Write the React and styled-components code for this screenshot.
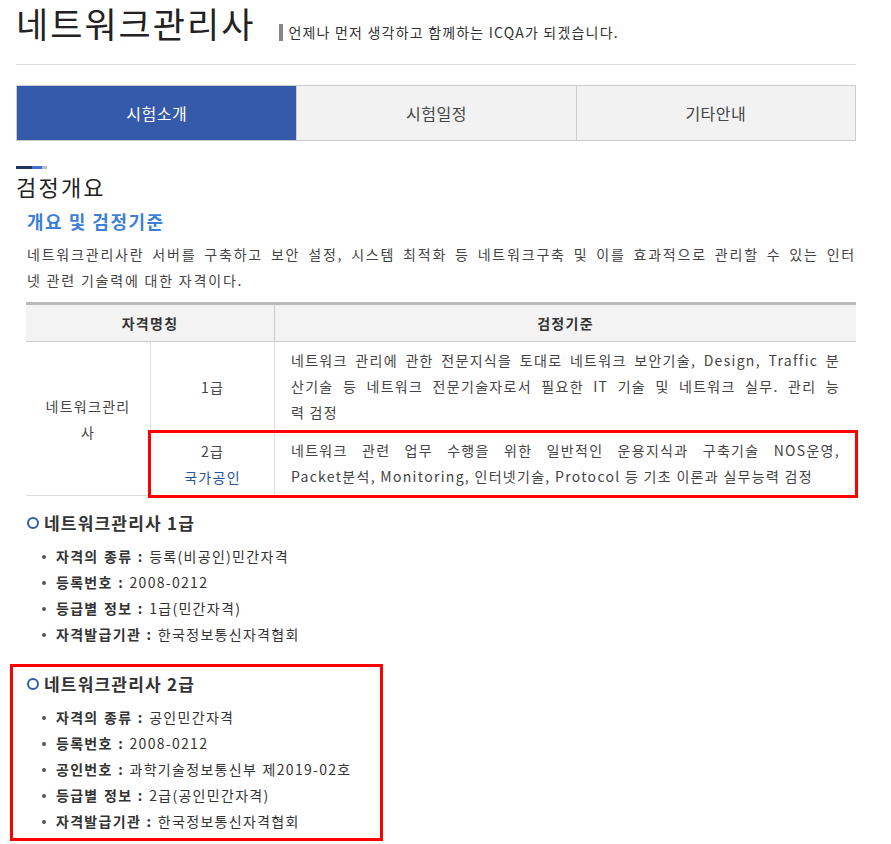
import React from 'react';
import styled, { createGlobalStyle } from 'styled-components';

const GlobalStyle = createGlobalStyle`
  html, body {
    margin: 0;
    padding: 0;
    background: #fff;
  }
  body {
    font-family: "Noto Sans CJK KR", "Noto Sans", sans-serif;
    color: #333;
  }
`;

const tabs = ['시험소개', '시험일정', '기타안내'];

const grade1 = [
  ['자격의 종류', '등록(비공인)민간자격'],
  ['등록번호', '2008-0212'],
  ['등급별 정보', '1급(민간자격)'],
  ['자격발급기관', '한국정보통신자격협회'],
];

const grade2 = [
  ['자격의 종류', '공인민간자격'],
  ['등록번호', '2008-0212'],
  ['공인번호', '과학기술정보통신부 제2019-02호'],
  ['등급별 정보', '2급(공인민간자격)'],
  ['자격발급기관', '한국정보통신자격협회'],
];

const App = () => (
  <>
    <GlobalStyle />
    <Page>
      <Header>
        <Title>네트워크관리사</Title>
        <Slogan>언제나 먼저 생각하고 함께하는 ICQA가 되겠습니다.</Slogan>
      </Header>

      <Tabs>
        {tabs.map((t, i) => (
          <Tab key={t} active={i === 0}>{t}</Tab>
        ))}
      </Tabs>

      <Decor>
        <DecorPart color="#1f355e" w={16} />
        <DecorPart color="#3a72cc" w={10} />
        <DecorPart color="#bbbbbb" w={5} />
      </Decor>
      <PageHeading>검정개요</PageHeading>

      <SubHeading>개요 및 검정기준</SubHeading>
      <Para>
        <JLine>네트워크관리사란 서버를 구축하고 보안 설정, 시스템 최적화 등 네트워크구축 및 이를 효과적으로 관리할 수 있는 인터</JLine>
        <Line>넷 관련 기술력에 대한 자격이다.</Line>
      </Para>

      <Table>
        <HeadCell span={2}>자격명칭</HeadCell>
        <HeadCell divider>검정기준</HeadCell>

        <NameCell>네트워크관리<br />사</NameCell>
        <GradeCell>1급</GradeCell>
        <DescCell>
          <JLine>네트워크 관리에 관한 전문지식을 토대로 네트워크 보안기술, Design, Traffic 분</JLine>
          <JLine>산기술 등 네트워크 전문기술자로서 필요한 IT 기술 및 네트워크 실무. 관리 능</JLine>
          <Line>력 검정</Line>
        </DescCell>

        <MarkedRow>
          <GradeCell>
            2급<br />
            <Certified>국가공인</Certified>
          </GradeCell>
          <DescCell>
            <JLine>네트워크 관련 업무 수행을 위한 일반적인 운용지식과 구축기술 NOS운영,</JLine>
            <Line>Packet분석, Monitoring, 인터넷기술, Protocol 등 기초 이론과 실무능력 검정</Line>
          </DescCell>
        </MarkedRow>
      </Table>

      <Section>
        <GradeTitle><Ring />네트워크관리사 1급</GradeTitle>
        <InfoList>
          {grade1.map(([k, v]) => (
            <InfoItem key={k}><b>{k} :</b> {v}</InfoItem>
          ))}
        </InfoList>
      </Section>

      <Section marked>
        <GradeTitle><Ring />네트워크관리사 2급</GradeTitle>
        <InfoList>
          {grade2.map(([k, v]) => (
            <InfoItem key={k}><b>{k} :</b> {v}</InfoItem>
          ))}
        </InfoList>
      </Section>
    </Page>
  </>
);

const Page = styled.div`
  width: 840px;
  margin-left: 16px;
  padding-bottom: 20px;
`;

const Header = styled.header`
  display: flex;
  align-items: baseline;
  padding-bottom: 18px;
  border-bottom: 1px solid #dddddd;
`;

const Title = styled.h1`
  margin: 0;
  font-size: 35px;
  line-height: 46px;
  font-weight: 400;
  letter-spacing: 2px;
  color: #222;
`;

const Slogan = styled.span`
  margin-left: 24px;
  padding-left: 5px;
  border-left: 4px solid #888;
  font-size: 14px;
  line-height: 17px;
  letter-spacing: 1.2px;
  color: #333;
`;

const Tabs = styled.nav`
  display: grid;
  grid-template-columns: repeat(3, 1fr);
  margin-top: 20px;
  border: 1px solid #cccccc;
  background: #f2f2f2;
`;

const Tab = styled.div`
  height: 54px;
  display: flex;
  align-items: center;
  justify-content: center;
  font-size: 16px;
  letter-spacing: 0.5px;
  color: ${p => (p.active ? '#fff' : '#444')};
  background: ${p => (p.active ? '#355aa9' : 'transparent')};
  & + & {
    border-left: 1px solid #cccccc;
  }
`;

const Decor = styled.div`
  display: flex;
  margin-top: 25px;
  height: 3px;
`;

const DecorPart = styled.span`
  width: ${p => p.w}px;
  background: ${p => p.color};
`;

const PageHeading = styled.h2`
  margin: 2px 0 0;
  font-size: 22px;
  line-height: 30px;
  font-weight: 400;
  letter-spacing: 2.2px;
  color: #222;
`;

const SubHeading = styled.h3`
  margin: 7px 0 0 11px;
  font-size: 18px;
  line-height: 26px;
  font-weight: 700;
  letter-spacing: 1.5px;
  color: #3d7fd6;
`;

const Para = styled.div`
  margin: 7px 0 0 11px;
  font-size: 14px;
  line-height: 26px;
  letter-spacing: 1.8px;
  color: #444;
`;

const Line = styled.span`
  display: block;
`;

const JLine = styled(Line)`
  text-align: justify;
  text-align-last: justify;
`;

const Table = styled.div`
  display: grid;
  grid-template-columns: 124px 124px 1fr;
  margin: 9px 0 0 10px;
  border-top: 3px solid #bbbbbb;
  font-size: 14px;
  letter-spacing: 1.3px;
  color: #444;
`;

const HeadCell = styled.div`
  grid-column: span ${p => p.span || 1};
  height: 36px;
  display: flex;
  align-items: center;
  justify-content: center;
  background: #f3f3f3;
  border-bottom: 1px solid #cccccc;
  border-left: ${p => (p.divider ? '1px solid #cccccc' : 'none')};
  font-weight: 700;
  color: #333;
`;

const NameCell = styled.div`
  grid-row: 2 / 4;
  display: flex;
  align-items: center;
  justify-content: center;
  padding: 0 12px;
  text-align: center;
  line-height: 26px;
  border-bottom: 1px solid #dddddd;
`;

const GradeCell = styled.div`
  display: flex;
  flex-direction: column;
  align-items: center;
  justify-content: center;
  text-align: center;
  line-height: 26px;
  border-left: 1px solid #dddddd;
  border-bottom: 1px solid #dddddd;
`;

const DescCell = styled.div`
  padding: 5px 16px 6px;
  line-height: 26px;
  border-left: 1px solid #dddddd;
  border-bottom: 1px solid #dddddd;
`;

const MarkedRow = styled.div`
  grid-column: 2 / 4;
  display: grid;
  grid-template-columns: 124px 1fr;
  outline: 3px solid #ff0000;
  outline-offset: -1px;
`;

const Certified = styled.span`
  color: #2556a0;
`;

const Section = styled.section`
  width: 350px;
  margin: ${p => (p.marked ? '10px' : '7px')} 0 0 -6px;
  padding: 4px 3px 4px 14px;
  border: 3px solid ${p => (p.marked ? '#ff0000' : 'transparent')};
`;

const GradeTitle = styled.h4`
  display: flex;
  align-items: center;
  gap: 5px;
  margin: 0;
  font-size: 17px;
  line-height: 26px;
  font-weight: 700;
  letter-spacing: 1.2px;
  color: #333;
`;

const Ring = styled.span`
  width: 8px;
  height: 8px;
  border: 2px solid #2f5ea8;
  border-radius: 50%;
`;

const InfoList = styled.ul`
  list-style: none;
  margin: 7px 0 0;
  padding: 0 0 0 15px;
`;

const InfoItem = styled.li`
  position: relative;
  padding-left: 14px;
  font-size: 14px;
  line-height: 26px;
  letter-spacing: 1.3px;
  word-spacing: 1px;
  color: #333;
  &::before {
    content: '';
    position: absolute;
    left: 0;
    top: 12px;
    width: 4px;
    height: 4px;
    border-radius: 50%;
    background: #555;
  }
  b {
    font-weight: 700;
  }
`;

export default App;
